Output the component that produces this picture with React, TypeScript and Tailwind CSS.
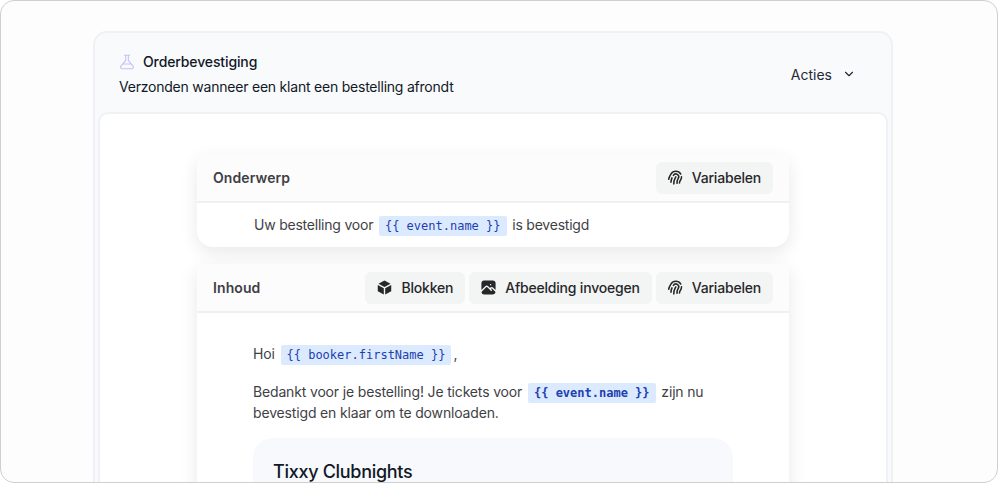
import { ChevronDown } from 'lucide-react'
import type { ReactNode } from 'react'
import { TbFingerprint, TbPhotoFilled } from 'react-icons/tb'

function ToolButton({ icon, label }: { icon: ReactNode; label: string }): JSX.Element {
    return (
        <button className="flex h-8 items-center gap-2 rounded-md bg-[#f3f4f4] pl-[11px] pr-3 text-[14px] font-medium tracking-[-0.2px] text-[#27272a]">
            {icon}
            {label}
        </button>
    )
}

function Variable({ name, bold }: { name: string; bold?: boolean }): JSX.Element {
    return (
        <span
            className={`mx-[2px] inline-block h-5 rounded-[2px] bg-[#dbeafe] px-[6px] align-baseline font-['DejaVu_Sans_Mono',monospace] text-[12px] leading-5 tracking-normal text-[#1e40af] ${
                bold ? 'font-bold' : ''
            }`}
        >
            {`{{ ${name} }}`}
        </span>
    )
}

// three filled faces of a cube, the gaps between them read as white lines
function CubeIcon(): JSX.Element {
    return (
        <svg viewBox="0 0 24 24" className="h-[17px] w-[17px]" fill="currentColor">
            <path d="M12 2 20.5 6.6 12 11.2 3.5 6.6Z" />
            <path d="M2.5 8.4 11 13v9L2.5 17.4Z" />
            <path d="M21.5 8.4 13 13v9l8.5-4.6Z" />
        </svg>
    )
}

function FlaskIcon(): JSX.Element {
    return (
        <svg
            viewBox="0 0 24 24"
            className="h-4 w-4 text-[#c4c1fb]"
            fill="none"
            stroke="currentColor"
            strokeWidth={1.6}
            strokeLinecap="round"
            strokeLinejoin="round"
        >
            <path d="M8 2h8" />
            <path d="M10 2v7.5L2.6 18.6A2.2 2.2 0 0 0 4.3 22h15.4a2.2 2.2 0 0 0 1.7-3.4L14 9.5V2" />
            <path d="M6.5 15h11" />
        </svg>
    )
}

const fingerprint = <TbFingerprint className="h-[17px] w-[17px] rotate-[30deg]" strokeWidth={2.2} />

export default function App(): JSX.Element {
    return (
        <div className="h-[483px] w-[1000px] overflow-hidden bg-white font-['Inter',sans-serif]">
            <div className="h-[483px] w-[998px] overflow-hidden rounded-[14px] border border-[#cfcfcf] bg-[#fdfdfd] pl-[92px] pr-[104px] pt-[30px]">
                <div className="rounded-t-[14px] border-2 border-b-0 border-[#eff1f4] bg-[#f9fafb] px-[3px]">
                    <div className="flex h-[79px] items-center justify-between pl-[21px] pr-[32px] pt-[3px]">
                        <div className="flex flex-col gap-[5px] text-[14px] leading-[20px] tracking-[-0.22px] text-[#111827]">
                            <div className="flex items-center gap-[8px] font-medium tracking-[-0.12px]">
                                <FlaskIcon />
                                Orderbevestiging
                            </div>
                            <div>Verzonden wanneer een klant een bestelling afrondt</div>
                        </div>
                        <div className="flex items-center gap-[10px] text-[14px] text-[#1f2937]">
                            Acties
                            <ChevronDown className="h-[14px] w-[14px]" strokeWidth={2} />
                        </div>
                    </div>
                    <div className="h-[400px] rounded-t-[10px] border-2 border-b-0 border-[#eff1f4] bg-white px-[97px] pt-[40px]">
                        <section className="rounded-b-[16px] rounded-t-[8px] bg-white shadow-[0_6px_18px_rgba(0,0,0,0.09)]">
                            <div className="flex h-[49px] items-center justify-between border-b-2 border-[#eff0f3] bg-[#fcfcfc] px-4">
                                <span className="text-[14px] font-semibold tracking-[0.1px] text-[#3f3f46]">Onderwerp</span>
                                <ToolButton icon={fingerprint} label="Variabelen" />
                            </div>
                            <div className="flex h-[44px] items-center pl-[57px] text-[14px] tracking-[-0.22px] text-[#3f3f46]">
                                <span>
                                    Uw bestelling voor <Variable name="event.name" /> is bevestigd
                                </span>
                            </div>
                        </section>
                        <section className="mt-[17px] bg-white shadow-[0_6px_18px_rgba(0,0,0,0.09)]">
                            <div className="flex h-[49px] items-center justify-between border-b-2 border-[#eff0f3] bg-[#fcfcfc] px-4">
                                <span className="text-[14px] font-semibold tracking-[0.1px] text-[#3f3f46]">Inhoud</span>
                                <div className="flex gap-1">
                                    <ToolButton icon={<CubeIcon />} label="Blokken" />
                                    <ToolButton
                                        icon={<TbPhotoFilled className="h-[17px] w-[17px]" />}
                                        label="Afbeelding invoegen"
                                    />
                                    <ToolButton icon={fingerprint} label="Variabelen" />
                                </div>
                            </div>
                            <div className="px-[56px] pt-[31px] text-[14px] leading-[20px] tracking-[-0.16px] text-[#3f3f46]">
                                <p>
                                    Hoi <Variable name="booker.firstName" />,
                                </p>
                                <p className="mt-[17px] w-[470px]">
                                    Bedankt voor je bestelling! Je tickets voor <Variable name="event.name" bold /> zijn
                                    nu bevestigd en klaar om te downloaden.
                                </p>
                                <div className="mt-[15px] h-[120px] rounded-[20px] bg-[#f8f9fc] px-5 pt-[22px]">
                                    <h2 className="text-[18px] font-medium leading-[24px] tracking-[-0.3px] text-[#111827]">
                                        Tixxy Clubnights
                                    </h2>
                                </div>
                            </div>
                        </section>
                    </div>
                </div>
            </div>
        </div>
    )
}
